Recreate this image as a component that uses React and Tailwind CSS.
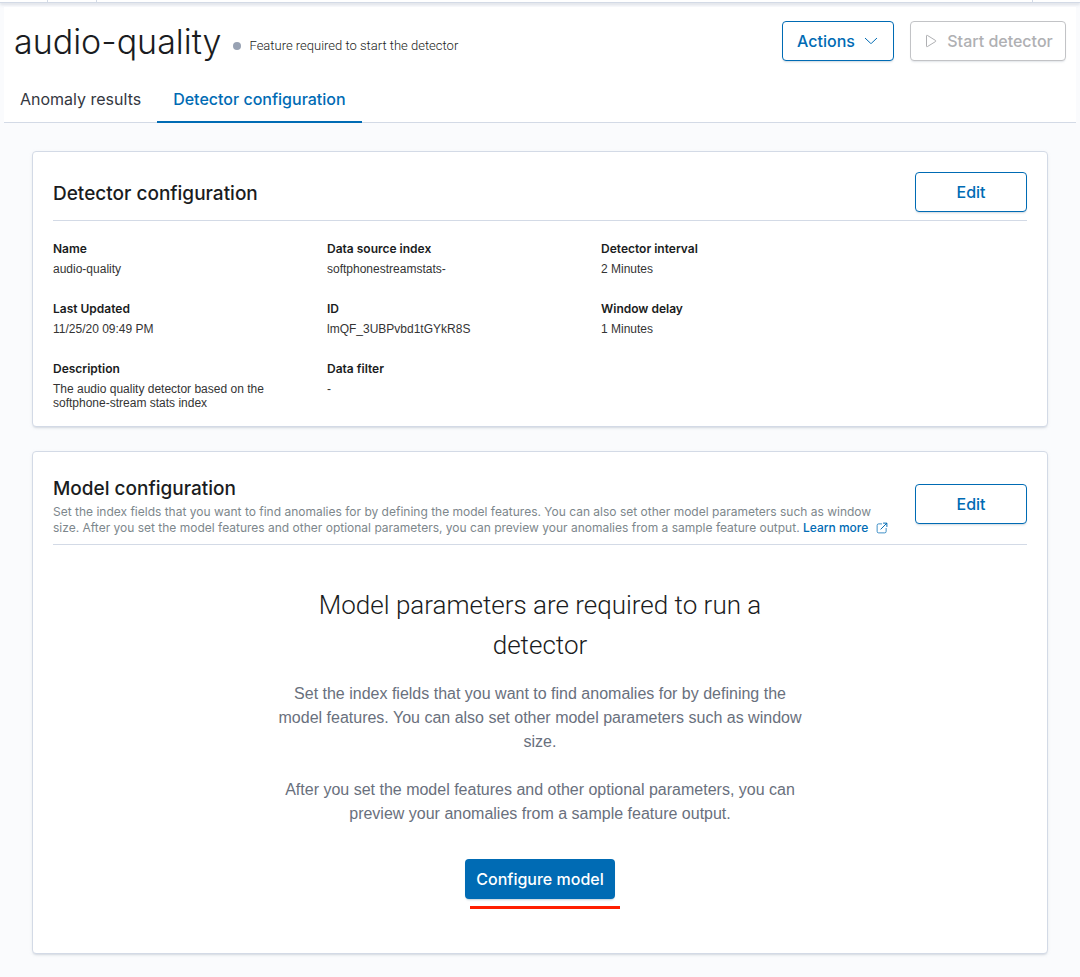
const DETAILS = [
  ["Name", "audio-quality"],
  ["Data source index", "softphonestreamstats-"],
  ["Detector interval", "2 Minutes"],
  ["Last Updated", "11/25/20 09:49 PM"],
  ["ID", "lmQF_3UBPvbd1tGYkR8S"],
  ["Window delay", "1 Minutes"],
  ["Description", "The audio quality detector based on the softphone-stream stats index"],
  ["Data filter", "-"],
];

function TopBar() {
  return (
    <div className="flex h-[3px] border-b border-[#d3dae6] bg-white shadow-[0_2px_3px_rgba(152,162,179,0.3)]">
      <div className="w-12 border-r border-[#d3dae6]" />
      <div className="w-[49px] border-r border-[#d3dae6]" />
      <div className="ml-auto w-12 border-l border-[#d3dae6]" />
    </div>
  );
}

function OutlineButton({ children, className = "" }) {
  return (
    <button
      type="button"
      className={`flex h-10 w-28 shrink-0 items-center justify-center rounded border border-[#006bb4] bg-white text-base font-medium text-[#006bb4] shadow-[0_2px_2px_-1px_rgba(54,97,126,0.25)] ${className}`}
    >
      {children}
    </button>
  );
}

function ArrowDownIcon() {
  return (
    <svg className="size-4" viewBox="0 0 16 16" fill="none" stroke="currentColor" strokeLinecap="round" aria-hidden="true">
      <path d="M2.300 5.300 7.600 10.300a.6.6 0 0 0 .8 0L13.700 5.300" />
    </svg>
  );
}

function PlayIcon() {
  return (
    <svg className="size-4" viewBox="0 0 16 16" fill="none" stroke="currentColor" strokeLinejoin="round" aria-hidden="true">
      <path d="M3.500 2.900v10.200a.6.6 0 0 0 .9.500l8.200-5.100a.6.6 0 0 0 0-1l-8.200-5.100a.6.6 0 0 0-.9.500Z" />
    </svg>
  );
}

function PopoutIcon() {
  return (
    <svg className="ml-1 inline-block size-3 align-[-2px]" viewBox="0 0 16 16" fill="none" stroke="currentColor" strokeLinecap="round" aria-hidden="true">
      <path d="M7.500 2.500H3.500A2 2 0 0 0 1.500 4.500v8A2 2 0 0 0 3.500 14.500h8a2 2 0 0 0 2-2V8.500" />
      <path d="M10 1.500h4.500V6M14.300 1.700 6.500 9.500" strokeWidth="1.300" />
    </svg>
  );
}

function Panel({ children, className = "" }) {
  return (
    <section
      className={`rounded border border-[#d3dae6] bg-white px-5 pt-5 shadow-[0_2px_2px_-1px_rgba(152,162,179,0.3),0_1px_5px_-2px_rgba(152,162,179,0.3)] ${className}`}
    >
      {children}
    </section>
  );
}

function PageHeader() {
  return (
    <header className="mx-1 mt-1 border-b border-[#d3dae6] bg-white">
      <div className="flex items-center gap-3 px-[10px] pt-[13px]">
        <h1 className="pt-0.5 text-[34px] leading-10 font-light text-[#1a1c21]">audio-quality</h1>
        <div className="flex items-center gap-2 pt-[9px]">
          <span className="size-2 rounded-full bg-[#98a2b3]" />
          <span className="font-['Roboto',sans-serif] text-[13px] font-light text-[#1a1c21]">
            Feature required to start the detector
          </span>
        </div>
        <div className="ml-auto flex gap-4">
          <OutlineButton className="gap-2">
            Actions <ArrowDownIcon />
          </OutlineButton>
          <button
            type="button"
            disabled
            className="flex h-10 w-[156px] items-center justify-center gap-2 rounded border border-[#c2c3c6] bg-white text-base font-medium text-[#afb0b3] shadow-[0_2px_2px_-1px_rgba(152,162,179,0.3)]"
          >
            <PlayIcon /> Start detector
          </button>
        </div>
      </div>
      <nav className="mt-[13px] -mb-px flex text-base leading-6">
        <a href="#results" className="px-4 pt-3 pb-[10px] text-[#343741]">
          Anomaly results
        </a>
        <a
          href="#configuration"
          aria-current="page"
          className="border-b-2 border-[#006bb4] px-4 pt-3 pb-[10px] font-medium text-[#006bb4]"
        >
          Detector configuration
        </a>
      </nav>
    </header>
  );
}

function DetectorPanel() {
  return (
    <Panel className="pb-4">
      <div className="flex items-center justify-between border-b border-[#d3dae6] pb-2">
        <h2 className="pt-1 text-[19px] leading-6 font-medium text-[#1a1c21]">Detector configuration</h2>
        <OutlineButton>Edit</OutlineButton>
      </div>
      <dl className="mt-5 grid max-w-[822px] grid-cols-3 gap-y-5 text-xs">
        {DETAILS.map(([label, value]) => (
          <div key={label} className="min-h-10 pr-8">
            <dt className="leading-4 font-semibold text-[#1a1c21]">{label}</dt>
            <dd className="mt-[5px] font-['Liberation_Sans',sans-serif] leading-[14px] text-[#343434]">{value}</dd>
          </div>
        ))}
      </dl>
    </Panel>
  );
}

function ModelPanel() {
  return (
    <Panel className="mt-6 pb-[54px]">
      <div className="flex items-center justify-between gap-4 border-b border-[#d3dae6] pb-2">
        <div className="pt-[5px]">
          <h2 className="text-[19px] leading-6 font-medium text-[#1a1c21]">Model configuration</h2>
          <p className="mt-[3px] text-xs leading-4 text-[#7d878c]">
            Set the index fields that you want to find anomalies for by defining the model features. You can also set
            other model parameters such as window size. After you set the model features and other optional parameters,
            you can preview your anomalies from a sample feature output.{" "}
            <a href="#learn-more" className="font-medium whitespace-nowrap text-[#006bb4]">
              Learn more <PopoutIcon />
            </a>
          </p>
        </div>
        <OutlineButton>Edit</OutlineButton>
      </div>
      <div className="mx-auto mt-10 flex max-w-[528px] flex-col items-center text-center">
        <h3 className="max-w-[480px] font-['Roboto',sans-serif] text-[26px] leading-10 font-light text-[#1a1c21]">
          Model parameters are required to run a detector
        </h3>
        <div className="mt-[17px] space-y-6 font-['Liberation_Sans',sans-serif] text-base leading-6 text-[#69707d]">
          <p>
            Set the index fields that you want to find anomalies for by defining the model features. You can also set
            other model parameters such as window size.
          </p>
          <p>
            After you set the model features and other optional parameters, you can preview your anomalies from a sample
            feature output.
          </p>
        </div>
        <div className="relative mt-[33px]">
          <button
            type="button"
            className="h-10 w-[150px] rounded bg-[#006bb4] text-base font-medium text-white shadow-[0_2px_2px_-1px_rgba(54,97,126,0.3)]"
          >
            Configure model
          </button>
          <div className="absolute top-[47px] left-[5px] h-[3px] w-full bg-[#ff1e00]" />
        </div>
      </div>
    </Panel>
  );
}

export default function App() {
  return (
    <div className="min-h-screen bg-[#fafbfd] font-['Inter',sans-serif]">
      <TopBar />
      <PageHeader />
      <main className="px-8 pt-7 pb-6">
        <DetectorPanel />
        <ModelPanel />
      </main>
    </div>
  );
}
